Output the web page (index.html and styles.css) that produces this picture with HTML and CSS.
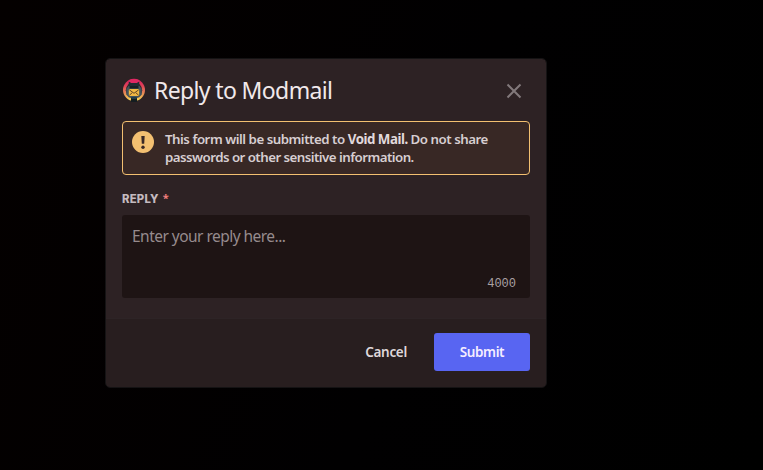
FILE: index.html
```html
<!DOCTYPE html>
<html lang="en">
<head>
<meta charset="utf-8">
<title>Reply to Modmail</title>
<link rel="stylesheet" href="styles.css">
</head>
<body>
<main class="modal">
  <header class="header">
    <svg class="avatar" viewBox="0 0 24 24">
      <defs>
        <linearGradient id="ring" x1="0" y1="0" x2="0" y2="1">
          <stop offset="0" stop-color="#df2060"/>
          <stop offset=".3" stop-color="#df4058"/>
          <stop offset=".65" stop-color="#e58b55"/>
          <stop offset="1" stop-color="#fbdc55"/>
        </linearGradient>
      </defs>
      <circle cx="12" cy="12" r="11" fill="url(#ring)"/>
      <circle cx="12" cy="12.3" r="8.2" fill="#30282b"/>
      <path d="M5.500 5h13L17 2Q12-.3 7 2Z" fill="#df2862"/>
      <path d="M9 20h6v4H9z" fill="#141d20"/>
      <path d="M6.500 9 6.800 3.500 9.200 5h5.600l2.400-1.500 .3 5.500z" fill="#202c32"/>
      <path d="M4.300 11 6.500 8h11l2.200 3v5.500L17 19.500H7l-2.700-3Z" fill="#43545b"/>
      <path d="M7.500 8h9v2.500h-9z" fill="#171f23"/>
      <rect x="6.800" y="11" width="10.400" height="7" rx="1" fill="#f1b844"/>
      <path d="m7.300 11.800 4.700 3.500 4.700-3.500M7.300 17.300l3-2.700M16.700 17.300l-3-2.700" fill="none" stroke="#654827" stroke-width="1"/>
      <path d="M9.500 19h5v2h-5z" fill="#233d45"/>
    </svg>
    <h1 class="title">Reply to Modmail</h1>
    <svg class="close" viewBox="0 0 16 16"><path d="M1.500 1.500l13 13M14.500 1.500l-13 13"/></svg>
  </header>
  <section class="notice">
    <svg class="warning" viewBox="0 0 22 22">
      <circle cx="11" cy="11" r="11" fill="#f3c071"/>
      <path d="M9.300 5h3.400l-.5 7.800H9.800Z" fill="#392826"/>
      <circle cx="11" cy="16.200" r="1.700" fill="#392826"/>
    </svg>
    <p class="message"><span class="line first">This form will be submitted to <b>Void Mail.</b> Do not share</span> <span class="line second">passwords or other sensitive information.</span></p>
  </section>
  <div class="label"><span class="name">REPLY</span><span class="required">*</span></div>
  <div class="field"><span class="placeholder">Enter your reply here...</span><span class="count">4000</span></div>
  <footer class="footer">
    <span class="cancel">Cancel</span>
    <span class="submit">Submit</span>
  </footer>
</main>
</body>
</html>
```

FILE: styles.css
```css
* { box-sizing: border-box; }
body {
  margin: 0;
  height: 470px;
  overflow: hidden;
  padding: 59px 0 0 106px;
  background: linear-gradient(110deg, #040000, #010001 55%, #000);
  font-family: "Noto Sans", sans-serif;
}
.modal {
  width: 440px;
  height: 328px;
  display: flex;
  flex-direction: column;
  border-radius: 4px;
  overflow: hidden;
  background: #2d2224;
  outline: 1px solid #151314;
}
.header {
  height: 62px;
  padding: 0 24px 0 16px;
  display: flex;
  align-items: center;
}
.avatar { width: 24px; height: 24px; }
.title {
  flex: 1;
  margin: 0 0 0 8px;
  font-size: 23px;
  font-weight: 400;
  line-height: 30px;
  letter-spacing: -.63px;
  white-space: nowrap;
  color: #f1e9eb;
}
.close { width: 16px; height: 16px; margin-top: 2px; }
.close path { fill: none; stroke: #82797b; stroke-width: 2; }
.notice {
  height: 54px;
  margin: 0 16px;
  padding: 8px 9px;
  display: flex;
  gap: 11px;
  border: 1px solid #f3c071;
  border-radius: 4px;
  background: #382825;
}
.warning { width: 22px; height: 22px; margin-top: 1px; flex: none; }
.message {
  margin: 0;
  font-size: 13.3px;
  font-weight: 600;
  line-height: 18px;
  color: #d7ced1;
}
.message b { font-weight: 700; color: #e1d9dc; }
.line { display: block; white-space: nowrap; }
.first { letter-spacing: -.48px; }
.second { letter-spacing: -.54px; }
.label {
  height: 40px;
  padding: 8px 16px 0;
  display: flex;
  gap: 4px;
  font-size: 12px;
  font-weight: 700;
  line-height: 32px;
  color: #c4babf;
}
.name {
  font-family: Inter, sans-serif;
  font-size: 11.3px;
  font-weight: 800;
  letter-spacing: .25px;
}
.required { font-size: 11px; line-height: 30px; color: #f07f7e; }
.field {
  height: 83px;
  margin: 0 16px;
  padding: 10px 14px 6px 10px;
  display: flex;
  flex-direction: column;
  justify-content: space-between;
  border-radius: 3px;
  background: #1e1414;
}
.placeholder {
  font-size: 15.5px;
  line-height: 22px;
  letter-spacing: -.53px;
  color: #968b8d;
}
.count {
  align-self: flex-end;
  font: 12px/16px "Liberation Mono", monospace;
  color: #aaa1a3;
}
.footer {
  height: 69px;
  margin-top: auto;
  padding: 0 16px 2px;
  display: flex;
  align-items: center;
  justify-content: flex-end;
  gap: 27px;
  border-top: 1px solid #2d2426;
  background: #281e1f;
  font-size: 13.5px;
  font-weight: 600;
  color: #dfd7da;
}
.cancel { letter-spacing: -.3px; }
.submit {
  width: 96px;
  height: 38px;
  line-height: 38px;
  text-align: center;
  letter-spacing: -.4px;
  border-radius: 3px;
  background: #5865f2;
  color: #f4edff;
}
```
